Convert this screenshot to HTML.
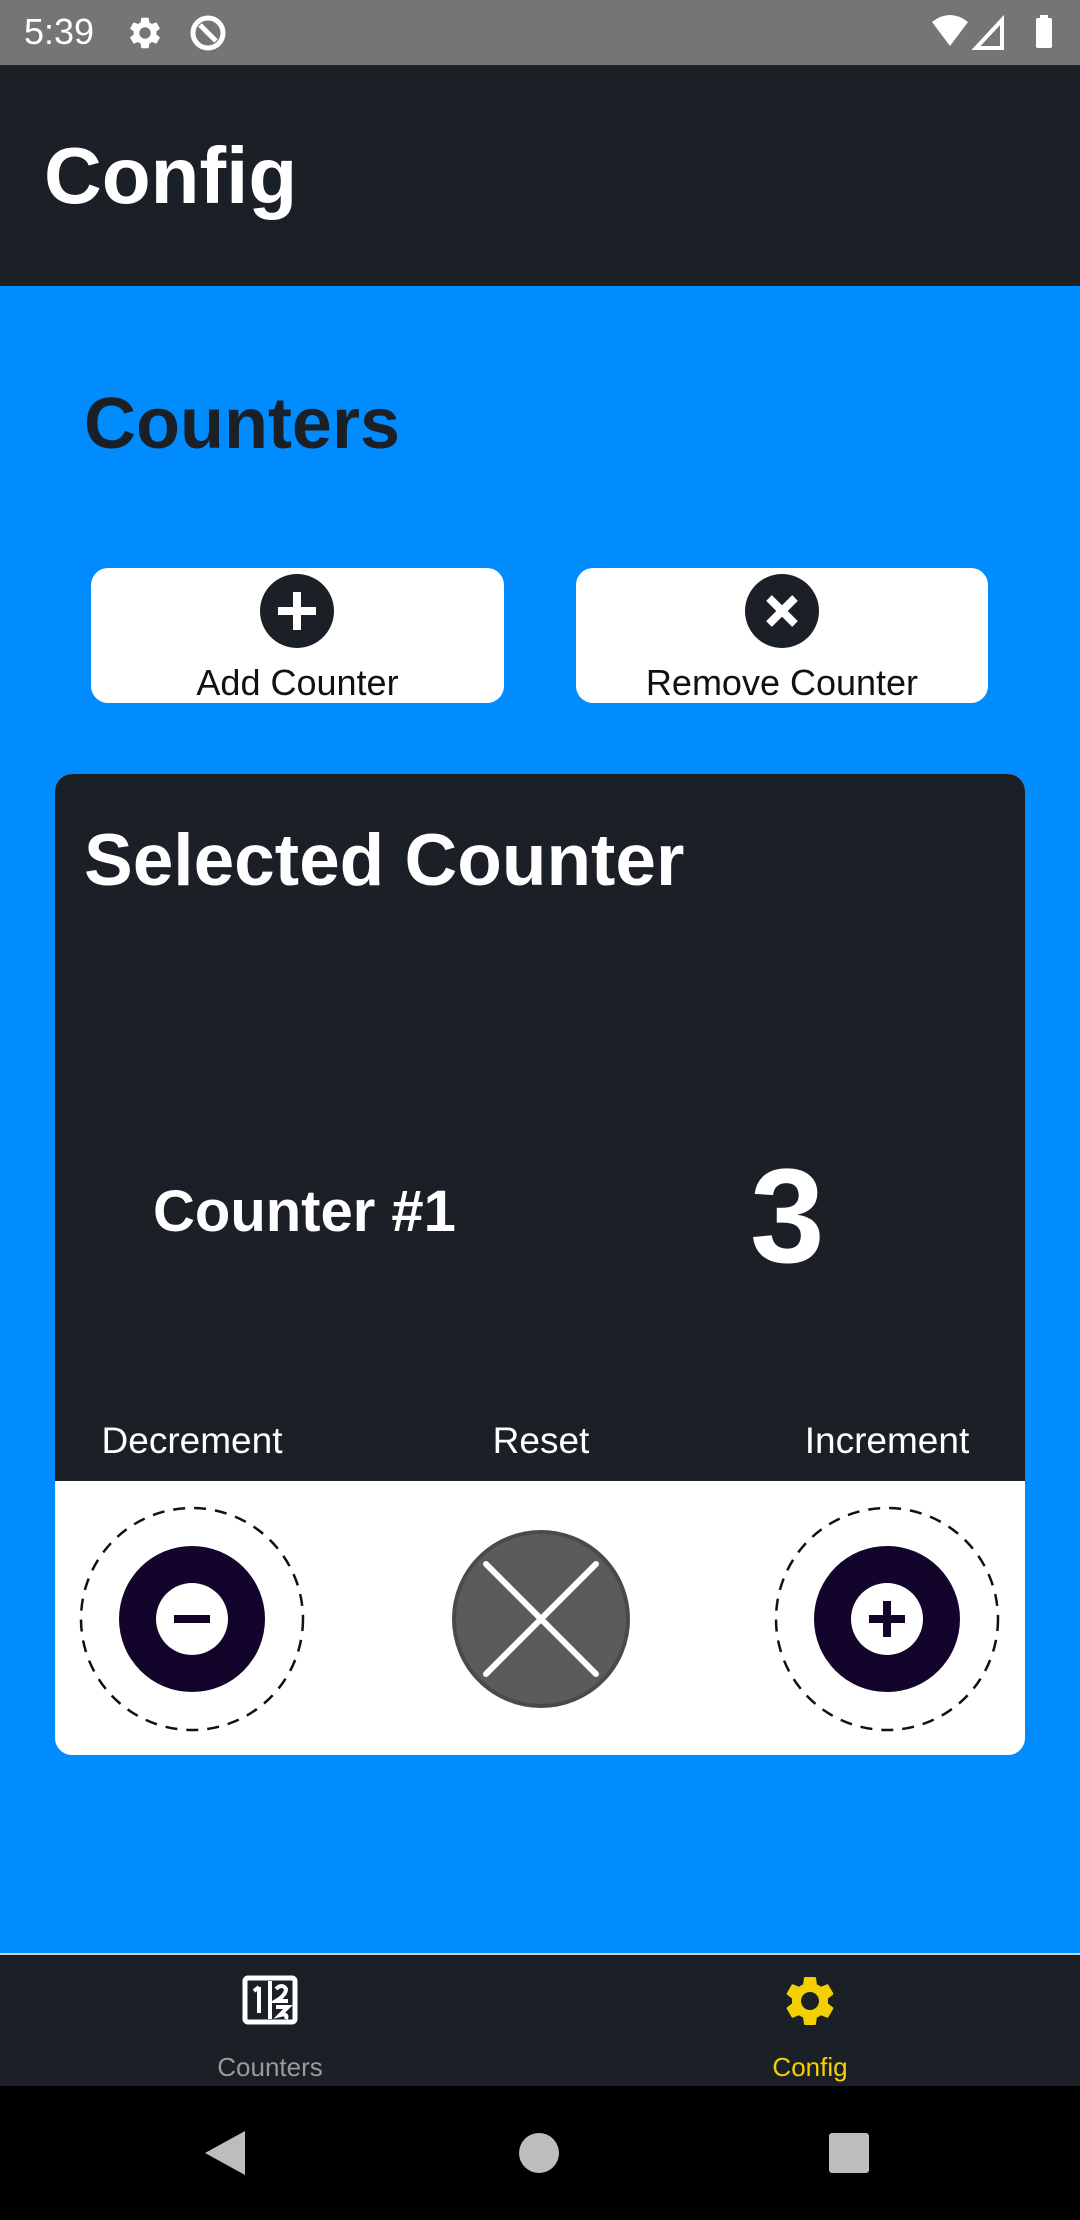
<!DOCTYPE html>
<html><head><meta charset="utf-8"><style>
*{margin:0;padding:0;box-sizing:border-box}
body{width:1080px;height:2220px;overflow:hidden;background:#008cff;font-family:"Liberation Sans",Roboto,sans-serif;position:relative}
.abs{position:absolute}
</style></head><body>
<div class="abs" style="left:0;top:0;width:1080px;height:65px;background:#757575"></div>
<div class="abs" style="left:24px;top:11px;color:#fff;font-size:36px">5:39</div>
<svg class="abs" style="left:126px;top:14px" width="38" height="38" viewBox="0 0 24 24"><path fill="#fff" d="M19.14 12.94c.04-.3.06-.61.06-.94 0-.32-.02-.64-.07-.94l2.03-1.58a.49.49 0 0 0 .12-.61l-1.92-3.32a.49.49 0 0 0-.59-.22l-2.39.96c-.5-.38-1.030-.7-1.62-.94l-.36-2.54a.48.48 0 0 0-.48-.41h-3.84c-.24 0-.43.17-.47.41l-.36 2.54c-.59.24-1.13.57-1.62.94l-2.39-.96a.48.48 0 0 0-.59.22L2.74 8.87c-.12.21-.08.47.12.61l2.03 1.58c-.05.3-.09.63-.09.94s.02.64.07.94l-2.03 1.58a.49.49 0 0 0-.12.61l1.92 3.32c.12.22.37.29.59.22l2.39-.96c.5.38 1.03.7 1.62.94l.36 2.54c.05.24.24.41.48.41h3.84c.24 0 .44-.17.47-.41l.36-2.54c.59-.24 1.13-.56 1.62-.94l2.39.96c.22.08.47 0 .59-.22l1.92-3.32c.12-.22.07-.47-.12-.61l-2.01-1.58zM12 15.6c-1.98 0-3.6-1.62-3.6-3.6s1.62-3.6 3.6-3.6 3.6 1.62 3.6 3.6-1.62 3.6-3.6 3.6z"/></svg>
<svg class="abs" style="left:188px;top:13px" width="40" height="40" viewBox="0 0 40 40"><circle cx="20" cy="20" r="15" fill="none" stroke="#fff" stroke-width="5"/><path d="M12 12 L28 28" stroke="#fff" stroke-width="5"/></svg>
<svg class="abs" style="left:930px;top:14px" width="140" height="38" viewBox="0 0 140 38">
<path d="M2 8 Q20 -6 38 8 L20 32 Z" fill="#fff"/>
<path d="M46 34 L72 6 L72 34 Z" fill="none" stroke="#fff" stroke-width="4"/>
<rect x="106" y="4" width="16" height="30" rx="2" fill="#fff"/><rect x="110" y="1" width="8" height="4" fill="#fff"/>
</svg>
<div class="abs" style="left:0;top:65px;width:1080px;height:221px;background:#1b1f26"></div>
<div class="abs" style="left:44px;top:136px;color:#fff;font-size:80px;font-weight:bold;line-height:1">Config</div>
<div class="abs" style="left:84px;top:388px;color:#1b1f26;font-size:72px;font-weight:bold;line-height:1">Counters</div>

<div class="abs" style="left:91px;top:568px;width:413px;height:135px;background:#fff;border-radius:17px"></div>
<svg class="abs" style="left:260px;top:574px" width="74" height="74" viewBox="0 0 74 74"><circle cx="37" cy="37" r="37" fill="#1b1f26"/><path d="M37 18V56M18 37H56" stroke="#fff" stroke-width="8"/></svg>
<div class="abs" style="left:91px;top:662px;width:413px;text-align:center;font-size:36px;color:#111">Add Counter</div>
<div class="abs" style="left:576px;top:568px;width:412px;height:135px;background:#fff;border-radius:17px"></div>
<svg class="abs" style="left:745px;top:574px" width="74" height="74" viewBox="0 0 74 74"><circle cx="37" cy="37" r="37" fill="#1b1f26"/><path d="M24 24L50 50M50 24L24 50" stroke="#fff" stroke-width="8"/></svg>
<div class="abs" style="left:576px;top:662px;width:412px;text-align:center;font-size:36px;color:#111">Remove Counter</div>

<div class="abs" style="left:55px;top:774px;width:970px;height:981px;background:#fff;border-radius:17px;overflow:hidden">
<div style="height:707px;background:#1b1f26"></div>
</div>
<div class="abs" style="left:84px;top:824px;color:#fff;font-size:73px;font-weight:bold;line-height:1">Selected Counter</div>
<div class="abs" style="left:153px;top:1183px;color:#fff;font-size:58px;font-weight:bold;line-height:1">Counter #1</div>
<div class="abs" style="left:750px;top:1150px;color:#fff;font-size:134px;font-weight:bold;line-height:1">3</div>
<div class="abs" style="left:92px;top:1420px;width:200px;text-align:center;color:#fff;font-size:37px">Decrement</div>
<div class="abs" style="left:441px;top:1420px;width:200px;text-align:center;color:#fff;font-size:37px">Reset</div>
<div class="abs" style="left:787px;top:1420px;width:200px;text-align:center;color:#fff;font-size:37px">Increment</div>

<svg class="abs" style="left:0;top:1481px" width="1080" height="274" viewBox="0 1481 1080 274">
<circle cx="192" cy="1619" r="111" fill="none" stroke="#111" stroke-width="2.5" stroke-dasharray="12 9"/>
<circle cx="192" cy="1619" r="73" fill="#12042a"/>
<circle cx="192" cy="1619" r="36" fill="#fff"/>
<path d="M174 1619H210" stroke="#12042a" stroke-width="8"/>
<circle cx="541" cy="1619" r="87" fill="#5b5b5b" stroke="#4a4a4a" stroke-width="4"/>
<path d="M486 1564L596 1674M596 1564L486 1674" stroke="#fff" stroke-width="6" stroke-linecap="round"/>
<circle cx="887" cy="1619" r="111" fill="none" stroke="#111" stroke-width="2.5" stroke-dasharray="12 9"/>
<circle cx="887" cy="1619" r="73" fill="#12042a"/>
<circle cx="887" cy="1619" r="36" fill="#fff"/>
<path d="M869 1619H905M887 1601V1637" stroke="#12042a" stroke-width="8"/>
</svg>

<div class="abs" style="left:0;top:1953px;width:1080px;height:133px;background:#1b1f26;border-top:2px solid #c8d0da"></div>
<svg class="abs" style="left:242px;top:1975px" width="56" height="50" viewBox="0 0 56 50"><rect x="3" y="3" width="50" height="44" rx="3" fill="none" stroke="#fff" stroke-width="5"/><path d="M17 12V38M12 16L17 12M28 6V44M34 14Q40 8 44 14Q44 20 34 26H46M34 32H46L38 40Q46 38 44 44" stroke="#fff" stroke-width="4" fill="none"/></svg>
<div class="abs" style="left:170px;top:2052px;width:200px;text-align:center;color:#9a9a9a;font-size:26px">Counters</div>
<svg class="abs" style="left:780px;top:1971px" width="60" height="60" viewBox="0 0 24 24"><path fill="#f5d000" d="M19.14 12.94c.04-.3.06-.61.06-.94 0-.32-.02-.64-.07-.94l2.030-1.58a.49.49 0 0 0 .12-.61l-1.92-3.32a.49.49 0 0 0-.59-.22l-2.39.96c-.5-.38-1.03-.7-1.62-.94l-.36-2.54a.48.48 0 0 0-.48-.41h-3.84c-.24 0-.43.17-.47.41l-.36 2.54c-.59.24-1.13.57-1.62.94l-2.39-.96a.48.48 0 0 0-.59.22L2.74 8.87c-.12.21-.08.47.12.61l2.03 1.58c-.05.3-.09.63-.09.94s.02.64.07.94l-2.03 1.58a.49.49 0 0 0-.12.61l1.92 3.32c.12.22.37.29.59.22l2.39-.96c.5.38 1.03.7 1.62.94l.36 2.54c.05.24.24.41.48.41h3.84c.24 0 .44-.17.47-.41l.36-2.54c.59-.24 1.13-.56 1.62-.94l2.39.96c.22.08.47 0 .59-.22l1.92-3.32c.12-.22.07-.47-.12-.61l-2.01-1.58zM12 15.6c-1.98 0-3.6-1.62-3.6-3.6s1.62-3.6 3.6-3.6 3.6 1.62 3.6 3.6-1.62 3.6-3.6 3.6z"/></svg>
<div class="abs" style="left:710px;top:2052px;width:200px;text-align:center;color:#f5d000;font-size:26px">Config</div>

<div class="abs" style="left:0;top:2086px;width:1080px;height:134px;background:#000"></div>
<svg class="abs" style="left:0;top:2086px" width="1080" height="134" viewBox="0 2086 1080 134">
<path d="M205 2153L245 2131V2175Z" fill="#bdbdbd"/>
<circle cx="539" cy="2153" r="20" fill="#bdbdbd"/>
<rect x="829" y="2133" width="40" height="40" rx="3" fill="#bdbdbd"/>
</svg>
</body></html>
